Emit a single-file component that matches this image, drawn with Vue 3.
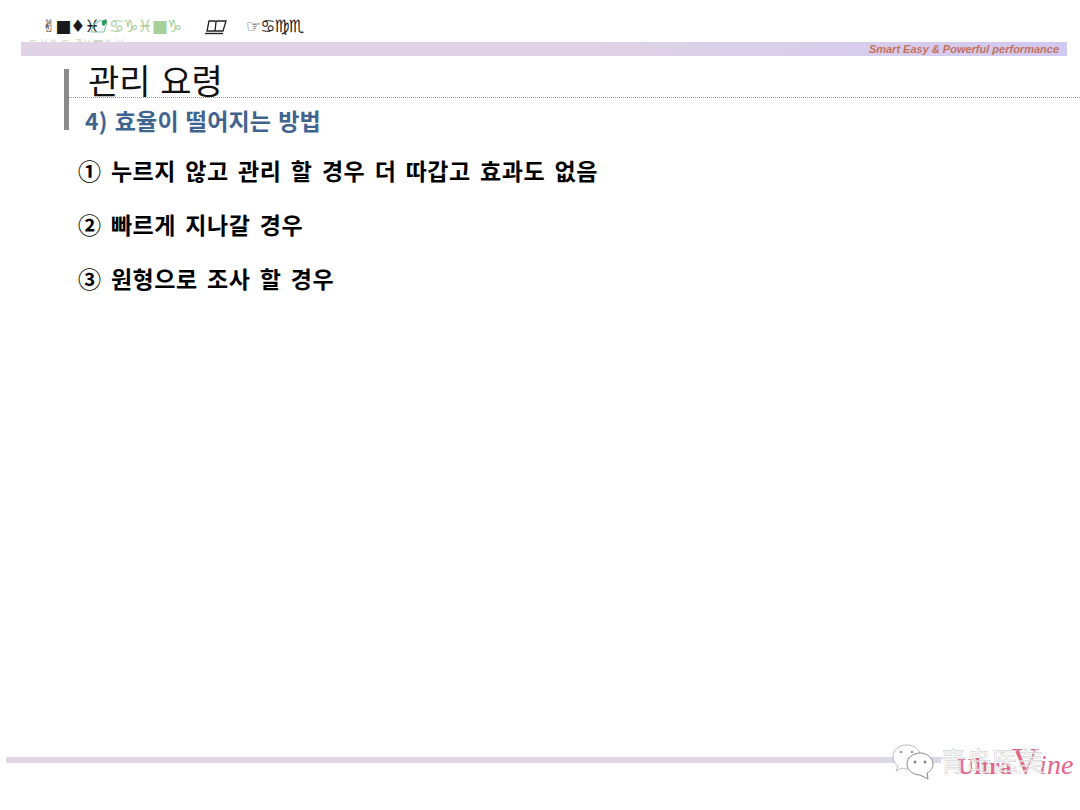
<script setup>
const items = [
  '① 누르지 않고 관리 할 경우 더 따갑고 효과도 없음',
  '② 빠르게 지나갈 경우',
  '③ 원형으로 조사 할 경우'
]
</script>

<template>
  <div class="page">
    <header class="head">
      <div class="ding">
        <span class="g1">✌■♦♓</span>
        <svg class="folder" width="19" height="16" viewBox="0 0 19 16"><path d="M1 14 L4 5 H7 L8 3 H14 L17 4 L14 14 Z" fill="none" stroke="#7cc09a" stroke-width="1"/><path d="M12 3 L16 1 L17 4 L14 8 L12 7 Z" fill="#2f9a5c"/></svg>
        <span class="green">♋♑♓■♑</span>
        <svg class="book" width="22" height="16" viewBox="0 0 22 16"><path d="M4 2 H10 L11 3 L12 2 H21 L18 12 H2 Z M11 3 L10 12" fill="none" stroke="#222" stroke-width="1.3"/><path d="M0 14.5 H18" stroke="#222" stroke-width="1.4"/></svg>
        <span class="face">☞♋♍♏</span>
      </div>
      <div class="band">
        <span class="ghost">♋♓♑♋♐♓■♑♓</span>
        <span class="slogan">Smart Easy &amp; Powerful performance</span>
      </div>
    </header>

    <main class="body">
      <section class="titled">
        <h1 class="title">관리 요령</h1>
        <h2 class="sub">4) 효율이 떨어지는 방법</h2>
      </section>
      <ul class="list">
        <li v-for="t in items" :key="t">{{ t }}</li>
      </ul>
    </main>

    <footer class="foot">
      <div class="rule"></div>
      <div class="mark">
        <svg class="wechat" width="42" height="36" viewBox="0 0 42 36">
          <path d="M15 1 C7 1 1 6 1 13 C1 17 3 20 6 22 L4 27 L10 24 C12 25 14 25 16 25" fill="#fff" stroke="#bbb" stroke-width="1"/>
          <path d="M15 1 C21 1 26 4 28 9" fill="none" stroke="#bbb" stroke-width="1"/>
          <path d="M28 9 C21 9 15 14 15 20 C15 26 21 31 28 31 L36 35 L35 29 C39 27 41 24 41 20 C41 14 35 9 28 9 Z" fill="#fff" stroke="#8a8a8a" stroke-width="1"/>
          <circle cx="9" cy="8" r="1.3" fill="#999"/><circle cx="20" cy="8" r="1.3" fill="#999"/>
          <circle cx="23" cy="18" r="1.5" fill="#888"/><circle cx="33" cy="18" r="1.5" fill="#888"/>
        </svg>
        <div class="mark-text">
          <span class="vine">Ultra<span class="v">V</span><i>ine</i></span>
          <span class="cn">青岛医美</span>
        </div>
      </div>
    </footer>
  </div>
</template>

<style>
html, body { margin: 0; background: #fff; }
</style>

<style scoped>
.page {
  width: 1080px;
  height: 810px;
  display: flex;
  flex-direction: column;
  overflow: hidden;
  background: #fff;
  font-family: "Noto Sans CJK KR", "Noto Sans", sans-serif;
  color: #000;
}
.head { padding: 14px 13px 0 21px; }
.ding {
  height: 28px;
  padding-left: 21px;
  display: flex;
  align-items: flex-start;
  font-family: "DejaVu Sans", sans-serif;
  font-size: 17px;
  line-height: 24px;
  font-style: italic;
  letter-spacing: -1px;
  color: #1a1a1a;
}
.g1 { width: 48px; white-space: nowrap; }
.green { color: #a6cf9a; width: 79px; white-space: nowrap; }
.folder { margin-top: 4px; }
.book { margin: 5px 0 0 17px; }
.face { margin-left: 19px; white-space: nowrap; }
.band {
  position: relative;
  height: 14px;
  background: linear-gradient(90deg, #e0d3e6 0%, #e0d3e6 55%, #d0c9f1 100%);
  display: flex;
  justify-content: flex-end;
  align-items: center;
  padding-right: 8px;
}
.ghost {
  position: absolute;
  left: 7px;
  top: -4px;
  height: 4px;
  overflow: hidden;
  font: 12px/12px "DejaVu Sans", sans-serif;
  color: #cfdcc6;
  white-space: nowrap;
}
.slogan {
  font: italic 700 11px/14px "Liberation Sans", sans-serif;
  color: #c8705a;
}
.body { flex: 1; padding: 13px 0 0 64px; }
.titled { border-left: 5px solid #8a8a8a; height: 61px; }
.title {
  margin: 0;
  height: 28px;
  padding-left: 19px;
  border-bottom: 1px dotted #999;
  font-size: 34px;
  font-weight: 400;
  line-height: 22px;
  word-spacing: 2px;
  color: #111;
}
.sub {
  margin: 0;
  padding: 8px 0 0 16px;
  font-size: 23px;
  font-weight: 700;
  line-height: 28px;
  letter-spacing: 0.2px;
  word-spacing: 1.6px;
  color: #3f6490;
}
.list {
  list-style: none;
  margin: 0;
  padding: 25px 0 0 14px;
}
.list li {
  font-size: 23px;
  font-weight: 700;
  line-height: 30px;
  margin-bottom: 24px;
  letter-spacing: 0.5px;
  word-spacing: 3.7px;
}
.foot { position: relative; height: 53px; }
.rule {
  margin-left: 6px;
  width: 935px;
  height: 6px;
  background: #e0d7e6;
}
.mark {
  position: absolute;
  left: 892px;
  top: -13px;
  display: flex;
  align-items: center;
}
.mark-text { position: relative; width: 146px; height: 36px; margin-left: 6px; }
.cn {
  position: absolute;
  left: 0;
  top: -1px;
  font-size: 26px;
  line-height: 34px;
  color: rgba(255, 255, 255, 0.7);
  -webkit-text-stroke: 0.5px #c9c9c9;
  white-space: nowrap;
}
.vine {
  position: absolute;
  left: 17px;
  top: 0;
  font: 700 24px/34px "Liberation Serif", serif;
  color: #e0668c;
  white-space: nowrap;
}
.vine .v { font-size: 38px; font-weight: 400; }
.vine i { font-weight: 400; font-size: 28px; }
</style>
